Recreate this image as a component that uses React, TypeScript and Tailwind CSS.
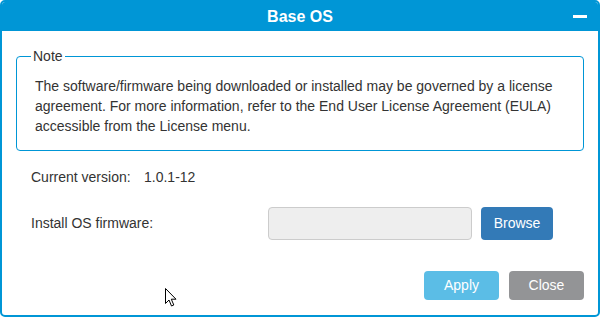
import React from "react";

export default function App() {
  return (
    <div
      className="relative w-[600px] h-[317px] bg-white"
      style={{ fontFamily: '"Liberation Sans", Arial, sans-serif' }}
    >
      <div className="flex flex-col w-[600px] h-[317px] border-2 border-[#0096d6] rounded-[5px] overflow-hidden bg-white">
        <div className="grid grid-cols-[1fr_auto_1fr] items-center h-[29px] bg-[#0096d6] shrink-0">
          <div />
          <div className="text-white font-bold text-[16px] leading-[18px]">Base OS</div>
          <div className="flex justify-end pr-[11px]">
            <div className="w-[14px] h-[3px] bg-white" />
          </div>
        </div>

        <div className="flex flex-col pt-[17px]">
          <fieldset className="mx-[14px] border border-[#0096d6] rounded-[4px] px-[18px] pt-[12px] pb-[14px]">
            <legend className="-ml-[4px] px-[2px] text-[14px] leading-[16px] text-[#333]">Note</legend>
            <p className="text-[14px] leading-[20px] text-[#333]">
              The software/firmware being downloaded or installed may be governed by a license agreement. For more information, refer to the End User License Agreement (EULA) accessible from the License menu.
            </p>
          </fieldset>

          <div className="flex items-center h-[20px] mt-[16px] pl-[29px] text-[14px] text-[#333]">
            <span className="w-[113px]">Current version:</span>
            <span>1.0.1-12</span>
          </div>

          <div className="flex items-center h-[33px] mt-[20px] pl-[29px] text-[14px] text-[#333]">
            <span className="w-[237px]">Install OS firmware:</span>
            <div className="w-[204px] h-[33px] bg-[#eeeeee] border border-[#cccccc] rounded-[4px]" />
            <button className="ml-[9px] w-[72px] h-[33px] bg-[#337ab7] rounded-[4px] text-white text-[14px]">
              Browse
            </button>
          </div>

          <div className="flex justify-end gap-[10px] mt-[31px] pr-[14px]">
            <button className="w-[75px] h-[29px] bg-[#5bbde6] rounded-[4px] text-white text-[14px]">
              Apply
            </button>
            <button className="w-[75px] h-[29px] bg-[#939496] rounded-[4px] text-white text-[14px]">
              Close
            </button>
          </div>
        </div>
      </div>

      <svg
        className="absolute left-[165px] top-[288px]"
        width="13"
        height="20"
        viewBox="0 0 13 20"
      >
        <path
          d="M0.5 0.5 L0.5 15.5 L4 12 L6.5 18 L8.8 17 L6.3 11.2 L11 11.2 Z"
          fill="white"
          stroke="black"
          strokeWidth="1"
          strokeLinejoin="miter"
        />
      </svg>
    </div>
  );
}
